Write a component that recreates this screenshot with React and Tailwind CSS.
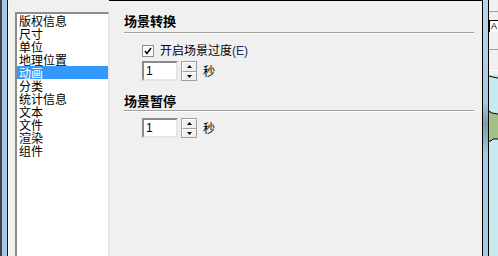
import React from "react";

const items = ["版权信息", "尺寸", "单位", "地理位置", "动画", "分类", "统计信息", "文本", "文件", "渲染", "组件"];

function Spin() {
  return (
    <div className="flex items-center ml-[18px] h-[20px]">
      <div className="w-[36px] h-[20px] bg-white border-2 border-t-[#8a8a8a] border-l-[#8a8a8a] border-b-[#e6e6e6] border-r-[#e6e6e6] flex items-center pl-[2px] text-[12px] leading-[14px] text-black font-['Liberation_Sans',sans-serif]">
        1
      </div>
      <div className="ml-[3px] w-[16px] h-[20px] flex flex-col border border-[#a0a0a0]">
        <div className="flex-1 bg-[#f0f0f0] border-b border-[#a0a0a0] flex items-center justify-center border-t border-l border-t-white border-l-white">
          <svg width="5" height="3" viewBox="0 0 5 3"><polygon points="2.5,0 5,3 0,3" fill="#000" /></svg>
        </div>
        <div className="flex-1 bg-[#f0f0f0] flex items-center justify-center border-t border-l border-t-white border-l-white">
          <svg width="5" height="3" viewBox="0 0 5 3"><polygon points="0,0 5,0 2.5,3" fill="#000" /></svg>
        </div>
      </div>
      <span className="ml-[6px] text-[12px] leading-[14px] text-black">秒</span>
    </div>
  );
}

export default function App() {
  return (
    <div className="w-[498px] h-[256px] flex bg-[#f0f0f0] overflow-hidden font-['Noto_Sans_CJK_SC','Noto_Sans',sans-serif]">
      {/* left window frame */}
      <div className="w-[2px] h-full bg-[#3a4550]" />
      <div className="w-[5px] h-full bg-[#a9c8e1]" />
      <div className="w-px h-full bg-[#111111]" />
      <div className="w-[7px] h-full bg-[#f0f0f0] border-l border-[#fafafa]" />

      {/* list box */}
      <div className="w-[94px] mt-[12px] h-[244px] bg-white border-t-2 border-l-2 border-r border-t-[#8c8c8c] border-l-[#8c8c8c] border-r-[#e3e3e3] flex flex-col">
        {items.map((it, i) => (
          <div
            key={it}
            className={
              "h-[13px] leading-[13px] text-[12px] pl-[2px] whitespace-nowrap " +
              (i === 4 ? "bg-[#3399ff] text-white" : "text-black")
            }
          >
            {it}
          </div>
        ))}
      </div>

      {/* right panel */}
      <div className="w-[373px] h-full border-t border-black pt-[12px] pl-[15px] pr-[8px] flex flex-col">
        <div className="h-[16px] leading-[16px] text-[13px] font-bold text-black">场景转换</div>
        <div className="mt-[3px] h-px bg-[#a0a0a0]" />
        <div className="h-px bg-white" />

        <div className="mt-[10px] ml-[18px] h-[13px] flex items-center">
          <div className="w-[12px] h-[12px] bg-white border border-[#8f8f8f] flex items-center justify-center">
            <svg width="8" height="8" viewBox="0 0 8 8">
              <polyline points="1,4 3,6.5 7,1" fill="none" stroke="#000" strokeWidth="1.6" />
            </svg>
          </div>
          <span className="ml-[6px] text-[12px] leading-[13px] text-black whitespace-nowrap">
            开启场景过度<span className="font-['Liberation_Sans',sans-serif] text-[#1a2a6a]">(E)</span>
          </span>
        </div>

        <div className="mt-[4px]">
          <Spin />
        </div>

        <div className="mt-[12px] h-[16px] leading-[16px] text-[13px] font-bold text-black">场景暂停</div>
        <div className="mt-px h-px bg-[#a0a0a0]" />
        <div className="h-px bg-white" />

        <div className="mt-[6px]">
          <Spin />
        </div>
      </div>

      {/* right edge */}
      <div className="w-px h-full bg-black" />
      <div className="w-[5px] h-full bg-[linear-gradient(to_bottom,#bcd6ea_0%,#a9c9e2_40%,#7f9ca8_48%,#8eaebc_54%,#a6cae5_60%,#a8cbe6_100%)]" />
      <div className="w-px h-full bg-black" />
      <div className="w-[9px] h-full flex flex-col bg-[#f0f0f0]">
        <div className="h-[11px]" />
        <div className="h-px bg-[#a0a0a0]" />
        <div className="h-[8px]" />
        <div className="h-[12px] bg-white border-t border-l border-black text-[9px] leading-[10px] pl-px font-['Liberation_Sans',sans-serif] overflow-hidden">
          A
        </div>
        <div className="h-[17px]" />
        <div className="h-px bg-[#a0a0a0]" />
        <div className="h-[20px]" />
        <div className="h-px bg-white" />
        <div className="h-[4px]" />
        <svg width="9" height="181" viewBox="0 0 9 181" className="block">
          <rect x="0" y="0" width="9" height="181" fill="#c7e9ef" />
          <polyline points="0,1 4,2 9,3" fill="none" stroke="#000" strokeWidth="1" />
          <polygon points="0,36 3,38 9,39 9,64 4,64 2,66 0,66" fill="#a3c089" />
          <polyline points="0,36 3,38 9,39" fill="none" stroke="#000" strokeWidth="1" />
          <polyline points="9,64 4,64 2,66 0,66" fill="none" stroke="#000" strokeWidth="1" />
        </svg>
      </div>
    </div>
  );
}
